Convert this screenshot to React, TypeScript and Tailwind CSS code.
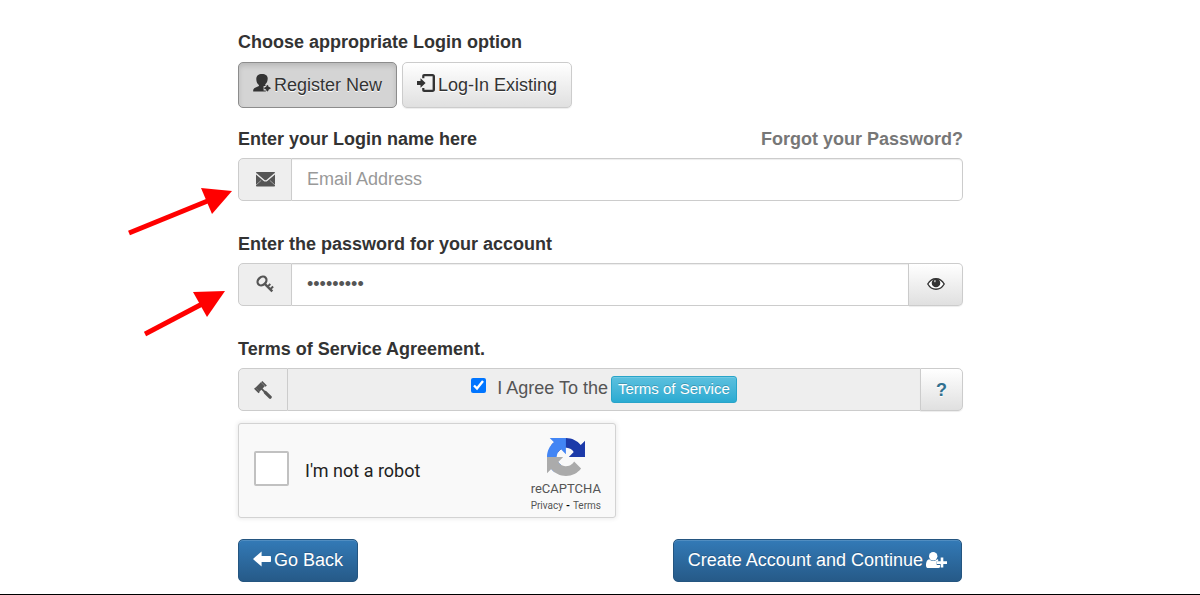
import React, { useState } from 'react';

interface IconProps {
  className?: string;
}

const PersonAddIcon: React.FC<IconProps> = ({ className = '' }) => (
  <svg viewBox="0 0 18 18" className={`w-[18px] h-[18px] shrink-0 ${className}`} fill="currentColor" aria-hidden="true">
    <path d="M9 0c3.600 0 5.700 1.700 5.700 4.600 0 2.500-1 4.700-2.400 6v.8l1.100.6v5.500H.2c-.2-1.900.4-3 1.900-3.700l3.300-1.500c.6-.3.6-.7.5-1.200-1.600-1.300-2.600-3.400-2.600-5.900C3.300 1.700 5.400 0 9 0Z" />
    <path fill="#d4d4d4" d="M12.800 9.800H16v2.300h2v4.300h-2V18h-3.200v-1.600h-2.200v-4.300h2.200z" />
    <path d="M14.400 10.800 15.600 13l2.400 1.200-2.400 1.200-1.200 2.300-1.200-2.300-2.300-1.200 2.300-1.200z" />
    <path d="M13.500 11.500h1.800v5.400h-1.800z" />
    <path d="M11.600 13.300h5.600v1.800h-5.600z" />
  </svg>
);

const LogInIcon: React.FC<IconProps> = ({ className = '' }) => (
  <svg viewBox="0 0 18 18" className={`w-[18px] h-[18px] shrink-0 ${className}`} fill="currentColor" aria-hidden="true">
    <path d="M7.200 0h8.300C17.100 0 18 .9 18 2.400v13.200c0 1.500-.9 2.400-2.500 2.400H7.200c-1.400 0-2-.7-2-2v-2h2.200v1.700h8.200V2.300H7.400v2H5.200V2c0-1.300.6-2 2-2Z" />
    <path d="M3.500 4.200 8.600 9l-5.100 4.800v-2.900H0V7.100h3.500z" />
  </svg>
);

const EnvelopeIcon = () => (
  <svg viewBox="0 0 19 15" className="w-[19px] h-[15px]" fill="currentColor" aria-hidden="true">
    <rect width="19" height="14.500" rx=".8" />
    <path d="M0 1.600 7.800 8.200c1.200 1 2.200 1 3.400 0L19 1.600" fill="none" stroke="#eee" strokeWidth="1.300" />
    <path d="m0 13 5.200-4.600M19 13l-5.200-4.600" fill="none" stroke="#eee" strokeWidth=".5" />
  </svg>
);

const KeyIcon = () => (
  <svg viewBox="0 0 18 18" className="w-[18px] h-[18px] mb-[2px]" aria-hidden="true">
    <ellipse cx="6" cy="6" rx="4.900" ry="3.800" transform="rotate(-42 6 6)" fill="none" stroke="currentColor" strokeWidth="2.300" />
    <path d="m8.300 8.300 8 8" fill="none" stroke="currentColor" strokeWidth="2.400" />
    <path d="m11.900 11.400 2.400-2.400M14.500 14l2.600-2.500" fill="none" stroke="currentColor" strokeWidth="2" />
  </svg>
);

const EyeIcon = () => (
  <svg viewBox="0 0 18 12" className="w-[18px] h-[12px]" aria-hidden="true">
    <path d="M.8 6C2.600 2.800 5.400.8 9 .8s6.400 2 8.200 5.200c-1.800 3.200-4.600 5.200-8.200 5.200S2.600 9.200.8 6Z" fill="#fff" stroke="currentColor" strokeWidth="1.400" />
    <circle cx="9" cy="5" r="4.300" fill="currentColor" />
    <path d="M7.800 2c1.200-.3.900.7.9 1.400 0 .8-1 1.300-1.500.7-.4-.7 0-1.800.6-2.100Z" fill="#bbb" />
  </svg>
);

const GavelIcon = () => (
  <svg viewBox="0 0 18 18" className="w-[18px] h-[18px]" fill="none" stroke="currentColor" aria-hidden="true">
    <path d="m3.400 8.700 5.400-5.400" strokeWidth="5.600" />
    <path d="m.7 7.100 4.500 4.500M7.700.7l4.500 4.500" strokeWidth="1.900" />
    <path d="m7 7.100 4 4" strokeWidth="1.900" />
    <path d="m11.500 11.600 4.600 4.500" strokeWidth="3.400" strokeLinecap="round" />
  </svg>
);

const ArrowLeftIcon = () => (
  <svg viewBox="0 0 18 16" className="w-[18px] h-[16px] mb-[2px] shrink-0" fill="currentColor" aria-hidden="true">
    <path d="M0 8 8.600.4v4.500H17c.6 0 1 .4 1 1v4.200c0 .6-.4 1-1 1H8.600v4.500z" />
  </svg>
);

const UserPlusIcon = () => (
  <svg viewBox="0 0 21 16" className="w-[21px] h-[16px] shrink-0" fill="currentColor" aria-hidden="true">
    <circle cx="7.200" cy="4.200" r="4.200" />
    <path d="M3.300 7.200c1 1.100 2.300 1.800 3.900 1.800s2.900-.7 3.900-1.800l1.100.4v1.600h-1.500v3.800h3.300v2.300c-.4.400-.9.700-1.500.7H2.400C.9 16 0 15 0 13.400c0-3.200.9-5.900 3.300-6.200Z" />
    <path d="M14.700 5.600h2.600v3.700H21v2.600h-3.700v3.700h-2.600v-3.700H11V9.300h3.700z" />
  </svg>
);

const RecaptchaLogo = () => (
  <svg viewBox="0 0 64 64" className="w-[38px] h-[38px]" aria-hidden="true">
    <path fill="#1c3aa9" d="M64 31.955l-.033-1.370V4.687l-7.160 7.160C50.948 4.674 42.033.093 32.050.093c-10.400 0-19.622 4.960-25.458 12.640l11.736 11.860a15.550 15.550 0 0 1 4.754-5.334c2.050-1.600 4.952-2.906 8.968-2.906.485 0 .86.057 1.135.163 4.976.393 9.288 3.140 11.828 7.124l-8.307 8.307L64 31.953" />
    <path fill="#4285f4" d="M31.862.094l-1.370.033H4.594l7.160 7.160C4.580 13.147 0 22.060 0 32.046c0 10.400 4.960 19.622 12.640 25.458L24.500 45.768a15.550 15.550 0 0 1-5.334-4.754c-1.600-2.050-2.906-4.952-2.906-8.968 0-.485.057-.86.163-1.135.393-4.976 3.140-9.288 7.124-11.828l8.307 8.307L31.860.095" />
    <path fill="#ababab" d="M.001 32.045l.033 1.370v25.898l7.160-7.160c5.860 7.173 14.774 11.754 24.760 11.754 10.400 0 19.622-4.960 25.458-12.640l-11.736-11.860a15.550 15.550 0 0 1-4.754 5.334c-2.050 1.600-4.952 2.906-8.968 2.906-.485 0-.86-.057-1.135-.163-4.976-.393-9.288-3.140-11.828-7.124l8.307-8.307L0 32.045" />
  </svg>
);

const label = 'block font-bold leading-[26px]';
const group = 'relative flex h-[43px]';
const addon = 'flex items-center justify-center shrink-0 bg-[#eee] border border-[#ccc] rounded-l-[5px] text-[#555]';
const field = 'flex-1 min-w-0 px-[15px] pb-[2px] bg-white border border-l-0 border-[#ccc] text-[#555] placeholder:text-[#999] shadow-[inset_0_1px_1px_rgba(0,0,0,0.075)] outline-none';
const defaultBtn = 'flex items-center justify-center border border-[#ccc] bg-linear-to-b from-white to-[#e0e0e0] [text-shadow:0_1px_0_#fff] shadow-[0_1px_1px_rgba(0,0,0,0.075)] cursor-pointer';
const activeBtn = 'flex items-center justify-center border border-[#8c8c8c] bg-[#d4d4d4] [text-shadow:0_1px_0_#fff] shadow-[inset_0_3px_5px_rgba(0,0,0,0.125)] cursor-pointer';
const modeBtn = 'h-[46px] px-[14px] gap-[3px] rounded-[5px]';
const primaryBtn = 'flex items-center gap-[3px] h-[43px] px-[14px] pb-[2px] rounded-[5px] border border-[#245580] bg-linear-to-b from-[#337ab7] to-[#265a88] text-white [text-shadow:0_-1px_0_rgba(0,0,0,0.2)] shadow-[inset_0_1px_0_rgba(255,255,255,0.15)] cursor-pointer';

export default function App() {
  const [mode, setMode] = useState<'register' | 'login'>('register');
  const [showPassword, setShowPassword] = useState(false);

  return (
    <main className="bg-white border-b border-black pt-[29px] pb-3 overflow-hidden font-['Liberation_Sans',Arial,sans-serif] text-[18px] leading-[26px] text-[#333]">
      <form className="w-full max-w-[726px] mx-auto pl-px" onSubmit={(e) => e.preventDefault()}>
        <h2 className={`${label} mb-[7px]`}>Choose appropriate Login option</h2>
        <div className="flex gap-[5px] mb-[18px]">
          <button
            type="button"
            onClick={() => setMode('register')}
            className={`${mode === 'register' ? activeBtn : defaultBtn} ${modeBtn}`}
          >
            <PersonAddIcon className="mb-1" />
            Register New
          </button>
          <button
            type="button"
            onClick={() => setMode('login')}
            className={`${mode === 'login' ? activeBtn : defaultBtn} ${modeBtn}`}
          >
            <LogInIcon className="mb-1" />
            Log-In Existing
          </button>
        </div>

        <div className="flex justify-between mb-[6px]">
          <label htmlFor="email" className={label}>Enter your Login name here</label>
          <a href="#forgot" className="font-bold text-[#777]">Forgot your Password?</a>
        </div>
        <div className={`${group} mb-[30px]`}>
          <span className={`${addon} w-[54px]`}><EnvelopeIcon /></span>
          <input id="email" type="email" placeholder="Email Address" className={`${field} rounded-r-[5px]`} />
          <svg viewBox="0 0 105 50" className="absolute left-[-110px] top-[28px] w-[105px] h-[50px] pointer-events-none" aria-hidden="true">
            <path d="M1 47 82 14" stroke="#f00" strokeWidth="5" />
            <path d="m73 2 31 3-20 23z" fill="#f00" />
          </svg>
        </div>

        <label htmlFor="password" className={`${label} mb-[6px]`}>Enter the password for your account</label>
        <div className={`${group} mb-[30px]`}>
          <span className={`${addon} w-[54px]`}><KeyIcon /></span>
          <input id="password" type={showPassword ? 'text' : 'password'} defaultValue="password1" className={field} />
          <button
            type="button"
            aria-label="Show password"
            onClick={() => setShowPassword(!showPassword)}
            className={`${defaultBtn} w-[54px] pb-[2px] border-l-0 rounded-r-[5px]`}
          >
            <EyeIcon />
          </button>
          <svg viewBox="0 0 82 48" className="absolute left-[-94px] top-[27px] w-[82px] h-[48px] pointer-events-none" aria-hidden="true">
            <path d="M1 44 60 13" stroke="#f00" strokeWidth="5" />
            <path d="m49 2 32-1-18 26z" fill="#f00" />
          </svg>
        </div>

        <h2 className={`${label} mb-[6px]`}>Terms of Service Agreement.</h2>
        <div className={`${group} mb-3`}>
          <span className={`${addon} w-[50px]`}><GavelIcon /></span>
          <div className="flex-1 flex items-center justify-center bg-[#eee] border-y border-[#ccc] text-[#555]">
            <input id="agree" type="checkbox" defaultChecked className="w-[15px] h-[15px] mr-[11px] mb-2" />
            <label htmlFor="agree" className="mr-[3px] mb-1">I Agree To the</label>
            <button
              type="button"
              className="h-[27px] px-[6px] pb-[2px] rounded-[3px] border border-[#28a4c9] bg-linear-to-b from-[#5bc0de] to-[#2aabd2] text-[15px] leading-[22px] text-white [text-shadow:0_-1px_0_rgba(0,0,0,0.2)] shadow-[inset_0_1px_0_rgba(255,255,255,0.15)] cursor-pointer"
            >
              Terms of Service
            </button>
          </div>
          <button type="button" className={`${defaultBtn} w-[43px] rounded-r-[5px] font-bold text-[#31708f]`}>?</button>
        </div>

        <div className="flex items-center justify-between w-full max-w-[378px] h-[95px] mb-[21px] pl-[15px] pr-[14px] bg-[#f9f9f9] border border-[#d3d3d3] rounded-[3px] shadow-[0_0_4px_1px_rgba(0,0,0,0.08)] font-[Roboto,sans-serif]">
          <div className="flex items-center gap-4">
            <input id="robot" type="checkbox" className="appearance-none w-[35px] h-[35px] mb-1 bg-white border-2 border-[#c1c1c1] rounded-[2px]" />
            <label htmlFor="robot" className="text-[#222]">I'm not a robot</label>
          </div>
          <div className="flex flex-col items-center pt-[10px] text-[#555]">
            <RecaptchaLogo />
            <span className="mt-1 text-[13px] leading-[18px]">reCAPTCHA</span>
            <span className="flex gap-[3px] text-[10px] leading-[16px]">
              <a href="#privacy">Privacy</a>
              <span className="font-bold text-black">-</span>
              <a href="#terms">Terms</a>
            </span>
          </div>
        </div>

        <div className="flex justify-between pr-px">
          <button type="button" className={primaryBtn}>
            <ArrowLeftIcon />
            Go Back
          </button>
          <button type="submit" className={primaryBtn}>
            Create Account and Continue
            <UserPlusIcon />
          </button>
        </div>
      </form>
    </main>
  );
}
